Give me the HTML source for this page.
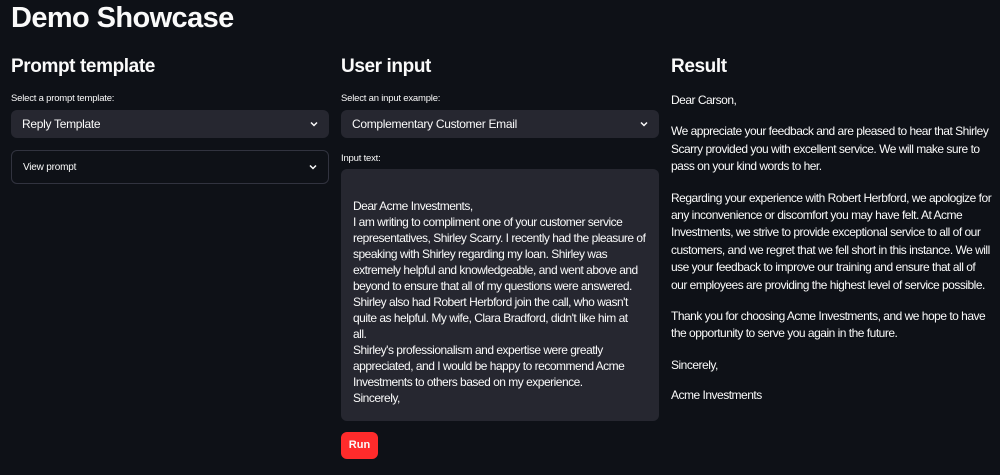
<!DOCTYPE html>
<html><head><style>
*{box-sizing:border-box;margin:0;padding:0}
body{width:1000px;height:475px;background:#0e1117;color:#fafafa;font-family:"Liberation Sans",sans-serif;position:relative;overflow:hidden}
.a{position:absolute}
h1{position:absolute;left:11px;top:2px;font-size:29px;font-weight:bold;letter-spacing:-0.6px}
h2{position:absolute;font-size:19px;font-weight:bold;top:56px;letter-spacing:-0.4px}
.lbl{position:absolute;top:93px;font-size:9.5px;letter-spacing:-0.2px}
.sel{position:absolute;height:28px;background:#262730;border-radius:6px;font-size:12px;letter-spacing:-0.3px;padding:7px 11px;width:318px}
.chev{position:absolute;right:10px;top:9px;width:10px;height:10px}
.t{font-size:12px;letter-spacing:-0.5px;white-space:nowrap;line-height:17.4px}
</style></head><body>
<h1>Demo Showcase</h1>
<h2 style="left:11px">Prompt template</h2>
<h2 style="left:341px">User input</h2>
<h2 style="left:671px">Result</h2>
<div class="lbl" style="left:11px">Select a prompt template:</div>
<div class="lbl" style="left:341px">Select an input example:</div>
<div class="sel" style="left:11px;top:110px">Reply Template<svg class="chev" viewBox="0 0 10 10"><path d="M2 3.5L5 6.5L8 3.5" stroke="#fafafa" stroke-width="1.5" fill="none"/></svg></div>
<div class="sel" style="left:341px;top:110px">Complementary Customer Email<svg class="chev" viewBox="0 0 10 10"><path d="M2 3.5L5 6.5L8 3.5" stroke="#fafafa" stroke-width="1.5" fill="none"/></svg></div>
<div class="a" style="left:11px;top:150px;width:318px;height:34px;border:1px solid #31333f;border-radius:6px;font-size:10px;padding:11px 11px;letter-spacing:-0.2px">View prompt<svg class="chev" style="top:11px" viewBox="0 0 10 10"><path d="M2 3.5L5 6.5L8 3.5" stroke="#fafafa" stroke-width="1.5" fill="none"/></svg></div>
<div class="lbl" style="left:341px;top:153px">Input text:</div>
<div class="a t" style="left:341px;top:169px;width:318px;height:252px;background:#262730;border-radius:6px;padding:29px 12px 0;line-height:16px">
Dear Acme Investments,<br>I am writing to compliment one of your customer service<br>representatives, Shirley Scarry. I recently had the pleasure of<br>speaking with Shirley regarding my loan. Shirley was<br>extremely helpful and knowledgeable, and went above and<br>beyond to ensure that all of my questions were answered.<br>Shirley also had Robert Herbford join the call, who wasn't<br>quite as helpful. My wife, Clara Bradford, didn't like him at<br>all.<br>Shirley's professionalism and expertise were greatly<br>appreciated, and I would be happy to recommend Acme<br>Investments to others based on my experience.<br>Sincerely,</div>
<div class="a" style="left:341px;top:432px;width:37px;height:27px;background:#ff2b2b;border-radius:6px;font-size:11px;font-weight:bold;text-align:center;line-height:27px">Run</div>
<div class="a t" style="left:671px;top:92px">
<div>Dear Carson,</div>
<div style="margin-top:14px">We appreciate your feedback and are pleased to hear that Shirley<br>Scarry provided you with excellent service. We will make sure to<br>pass on your kind words to her.</div>
<div style="margin-top:14px">Regarding your experience with Robert Herbford, we apologize for<br>any inconvenience or discomfort you may have felt. At Acme<br>Investments, we strive to provide exceptional service to all of our<br>customers, and we regret that we fell short in this instance. We will<br>use your feedback to improve our training and ensure that all of<br>our employees are providing the highest level of service possible.</div>
<div style="margin-top:14px">Thank you for choosing Acme Investments, and we hope to have<br>the opportunity to serve you again in the future.</div>
<div style="margin-top:14px">Sincerely,</div>
<div style="margin-top:13px">Acme Investments</div>
</div>
</body></html>
